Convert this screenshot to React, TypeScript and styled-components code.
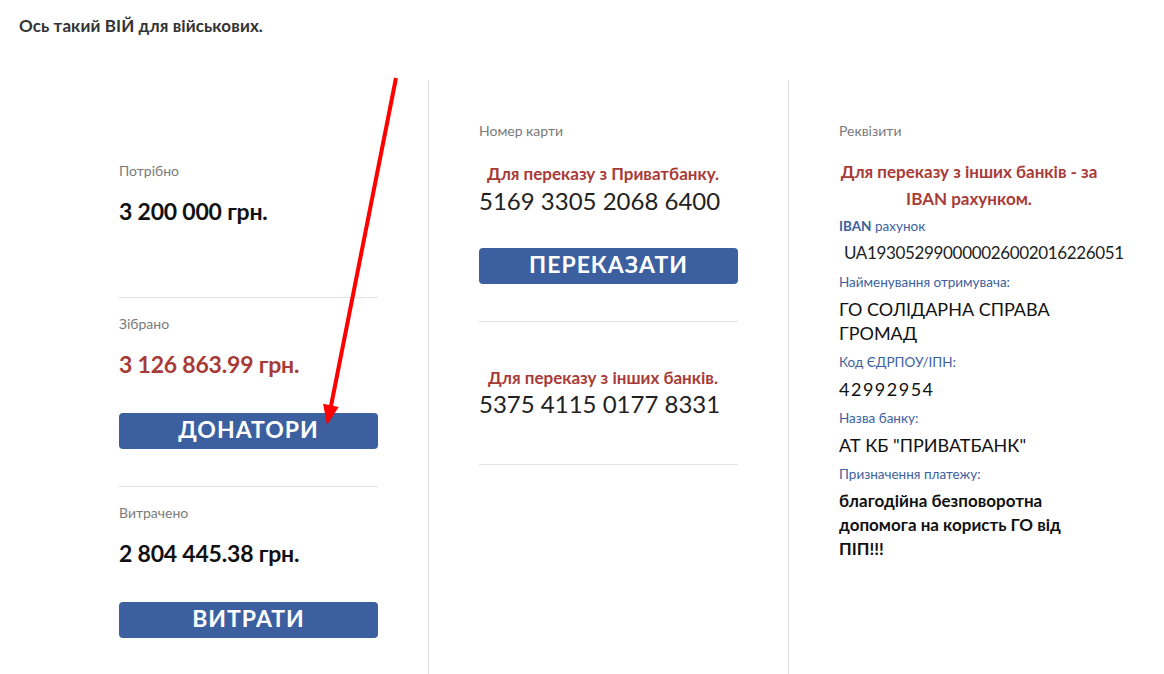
import styled, { createGlobalStyle } from "styled-components";

const GlobalStyle = createGlobalStyle`
    html, body {
        margin: 0;
        padding: 0;
        background: #fff;
        font-family: Lato, "Open Sans", sans-serif;
        color: #111;
    }
`;

const Page = styled.div`
    position: relative;
    width: 1164px;
    height: 674px;
    overflow: hidden;
`;

const Heading = styled.h1`
    margin: 0;
    padding: 16px 19px 0;
    font-size: 17px;
    line-height: 20px;
    font-weight: 700;
    letter-spacing: 0.1px;
    color: #333;
`;

const Columns = styled.div`
    display: grid;
    grid-template-columns: repeat(3, 360px);
    margin: 44px 0 0 69px;
    height: 600px;
`;

const Column = styled.div<{ $top: number; $last?: boolean }>`
    padding: ${(p) => p.$top}px 50px 0;
    border-right: ${(p) => (p.$last ? "none" : "1px solid #dcdcdc")};
    display: flex;
    flex-direction: column;
`;

const Section = styled.div<{ $top?: number; $bottom?: number; $noLine?: boolean }>`
    width: 259px;
    padding: ${(p) => p.$top ?? 17}px 0 ${(p) => p.$bottom ?? 37}px;
    border-bottom: ${(p) => (p.$noLine ? "none" : "1px solid #e3e3e3")};
`;

const Label = styled.div`
    font-size: 14px;
    line-height: 18px;
    color: #7a7a7a;
`;

const Amount = styled.div<{ $red?: boolean }>`
    margin-top: 17px;
    font-size: 23px;
    line-height: 28px;
    font-weight: 700;
    letter-spacing: -0.2px;
    color: ${(p) => (p.$red ? "#a83b37" : "#111")};
`;

const Button = styled.button<{ $gap: number }>`
    display: block;
    width: 259px;
    height: 36px;
    margin-top: ${(p) => p.$gap}px;
    padding: 0 0 4px;
    border: none;
    border-radius: 4px;
    background: #3c5fa0;
    color: #fff;
    font-family: Lato, sans-serif;
    font-size: 23px;
    line-height: 28px;
    font-weight: 700;
    letter-spacing: 1px;
    cursor: pointer;
`;

const Notice = styled.div<{ $top: number; $shift?: number }>`
    margin-top: ${(p) => p.$top}px;
    padding-right: ${(p) => p.$shift ?? 0}px;
    font-size: 17px;
    line-height: 20px;
    font-weight: 700;
    color: #a83b37;
    text-align: center;
`;

const Wrapped = styled(Notice)`
    line-height: 27px;
`;

const CardNumber = styled.div<{ $gap?: number }>`
    margin-top: ${(p) => p.$gap ?? 2}px;
    font-size: 24px;
    line-height: 30px;
    color: #222;
`;

const Field = styled.div<{ $first?: boolean }>`
    margin-top: ${(p) => (p.$first ? 5 : 8)}px;
    font-size: 13.5px;
    line-height: 18px;
    color: #3c5fa0;
`;

const Strong = styled.span`
    font-weight: 700;
`;

const Value = styled.div<{ $bold?: boolean; $spacing?: number }>`
    margin-top: 6px;
    font-size: ${(p) => (p.$bold ? 17 : 18)}px;
    line-height: 24px;
    font-weight: ${(p) => (p.$bold ? 700 : 400)};
    letter-spacing: ${(p) => p.$spacing ?? 0}px;
    color: #111;
    width: 259px;
`;

const Iban = styled(Value)`
    padding-left: 5px;
    font-size: 17px;
    white-space: nowrap;
    color: #222;
`;

const Arrow = styled.svg`
    position: absolute;
    left: 0;
    top: 0;
    pointer-events: none;
`;

export default function App() {
    return (
        <Page>
            <GlobalStyle />
            <Heading>Ось такий ВІЙ для військових.</Heading>
            <Columns>
                <Column $top={65}>
                    <Section $bottom={72}>
                        <Label>Потрібно</Label>
                        <Amount>3 200 000 грн.</Amount>
                    </Section>
                    <Section>
                        <Label>Зібрано</Label>
                        <Amount $red>3 126 863.99 грн.</Amount>
                        <Button $gap={35}>ДОНАТОРИ</Button>
                    </Section>
                    <Section $noLine>
                        <Label>Витрачено</Label>
                        <Amount>2 804 445.38 грн.</Amount>
                        <Button $gap={35}>ВИТРАТИ</Button>
                    </Section>
                </Column>
                <Column $top={42}>
                    <Section $top={0}>
                        <Label>Номер карти</Label>
                        <Notice $top={24} $shift={11}>Для переказу з Приватбанку.</Notice>
                        <CardNumber>5169 3305 2068 6400</CardNumber>
                        <Button $gap={32}>ПЕРЕКАЗАТИ</Button>
                    </Section>
                    <Section $top={46} $bottom={45}>
                        <Notice $top={0} $shift={11}>Для переказу з інших банків.</Notice>
                        <CardNumber $gap={1}>5375 4115 0177 8331</CardNumber>
                    </Section>
                </Column>
                <Column $top={42} $last>
                    <Label>Реквізити</Label>
                    <Wrapped $top={18}>
                        Для переказу з інших банків - за IBAN рахунком.
                    </Wrapped>
                    <Field $first>
                        <Strong>IBAN</Strong> рахунок
                    </Field>
                    <Iban $spacing={-0.35}>UA193052990000026002016226051</Iban>
                    <Field>Найменування отримувача:</Field>
                    <Value>ГО СОЛІДАРНА СПРАВА ГРОМАД</Value>
                    <Field>Код ЄДРПОУ/ІПН:</Field>
                    <Value $spacing={1.5}>42992954</Value>
                    <Field>Назва банку:</Field>
                    <Value>АТ КБ "ПРИВАТБАНК"</Value>
                    <Field>Призначення платежу:</Field>
                    <Value $bold>благодійна безповоротна допомога на користь ГО від ПІП!!!</Value>
                </Column>
            </Columns>
            <Arrow width="1164" height="674" viewBox="0 0 1164 674">
                <line x1="396" y1="78" x2="331" y2="406" stroke="#ff0000" strokeWidth="4" />
                <polygon points="327,425 338.7,407 323.1,403.8" fill="#ff0000" />
            </Arrow>
        </Page>
    );
}
